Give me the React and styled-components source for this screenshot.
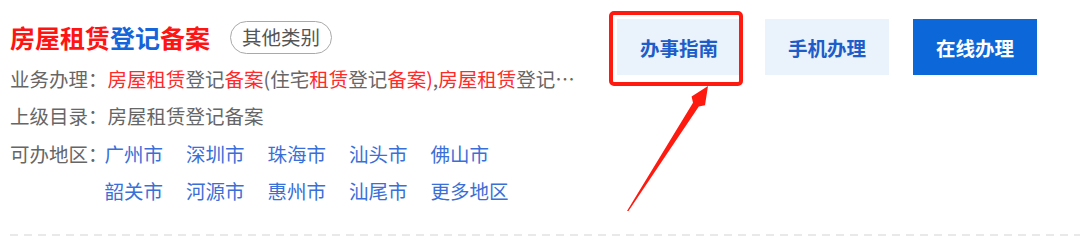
import React from "react";
import styled, { createGlobalStyle } from "styled-components";

const Global = createGlobalStyle`
  html, body { margin: 0; padding: 0; background: #fff; }
  body { font-family: "Noto Sans CJK SC", "Noto Sans", sans-serif; }
`;

const Page = styled.div`
  position: relative;
  width: 1080px;
  height: 240px;
  overflow: hidden;
`;

const Card = styled.div`
  display: flex;
  justify-content: space-between;
  align-items: flex-start;
  padding: 19px 43px 0 10px;
  height: 215px;
`;

const Info = styled.div`
  display: flex;
  flex-direction: column;
  width: 566px;
`;

const TitleRow = styled.div`
  display: flex;
  align-items: center;
  gap: 20px;
  height: 36px;
  margin-bottom: 4.5px;
`;

const Title = styled.h2`
  margin: 0;
  font-size: 25px;
  font-weight: 700;
  line-height: 36px;
  color: #ff1414;
  white-space: nowrap;
`;

const TitleBlue = styled.span`
  color: #1664d9;
`;

const Tag = styled.span`
  display: inline-flex;
  align-items: center;
  height: 31px;
  padding: 0 11px;
  border: 1px solid #a9a9a9;
  border-radius: 17px;
  font-size: 19.5px;
  color: #555;
  line-height: 1;
`;

const Row = styled.div`
  display: flex;
  align-items: flex-start;
  font-size: 19.5px;
  line-height: 37.5px;
  color: #666;
`;

const Label = styled.span`
  flex: none;
  color: #666;
`;

const Value = styled.span`
  flex: 1;
  min-width: 0;
  white-space: nowrap;
  overflow: hidden;
  text-overflow: ellipsis;
  color: #666;
`;

const Hi = styled.span`
  color: #ff2a2a;
`;

const Regions = styled.div`
  display: grid;
  grid-template-columns: repeat(5, auto);
  justify-content: start;
  column-gap: 23px;
  margin-left: -3px;
`;

const RegionLink = styled.a`
  color: #3a6fd8;
  text-decoration: none;
  white-space: nowrap;
`;

const Actions = styled.div`
  display: flex;
  gap: 24px;
`;

const Highlight = styled.div`
  position: relative;
  display: flex;
  &::after {
    content: "";
    position: absolute;
    left: -8px;
    top: -8px;
    right: -2px;
    bottom: -11px;
    border: 4px solid #ff1a10;
    border-radius: 5px;
    pointer-events: none;
  }
`;

const Button = styled.button`
  width: 124px;
  height: 56px;
  border: none;
  padding: 0;
  font-family: inherit;
  font-size: 19.5px;
  font-weight: 700;
  cursor: pointer;
  background: ${(p) => (p.$primary ? "#0c68d8" : "#eaf2fb")};
  color: ${(p) => (p.$primary ? "#ffffff" : "#1d5cc9")};
`;

const Divider = styled.div`
  margin-left: 10px;
  height: 2px;
  background: repeating-linear-gradient(
    to right,
    #e9e9e9 0 8px,
    transparent 8px 14px
  );
`;

const Arrow = styled.svg`
  position: absolute;
  left: 0;
  top: 0;
  pointer-events: none;
`;

const regions = [
  "广州市", "深圳市", "珠海市", "汕头市", "佛山市",
  "韶关市", "河源市", "惠州市", "汕尾市", "更多地区",
];

export default function App() {
  return (
    <Page>
      <Global />
      <Card>
        <Info>
          <TitleRow>
            <Title>
              房屋租赁<TitleBlue>登记</TitleBlue>备案
            </Title>
            <Tag>其他类别</Tag>
          </TitleRow>
          <Row>
            <Label>业务办理：</Label>
            <Value>
              <Hi>房屋租赁</Hi>登记<Hi>备案</Hi>(住宅<Hi>租赁</Hi>登记<Hi>备案)</Hi>,
              <Hi>房屋租赁</Hi>登记<Hi>备案</Hi>(非住宅<Hi>租赁</Hi>登记<Hi>备案)</Hi>
            </Value>
          </Row>
          <Row>
            <Label>上级目录：</Label>
            <Value>房屋租赁登记备案</Value>
          </Row>
          <Row>
            <Label>可办地区：</Label>
            <Regions>
              {regions.map((r) => (
                <RegionLink key={r} href="#">
                  {r}
                </RegionLink>
              ))}
            </Regions>
          </Row>
        </Info>
        <Actions>
          <Highlight>
            <Button>办事指南</Button>
          </Highlight>
          <Button>手机办理</Button>
          <Button $primary>在线办理</Button>
        </Actions>
      </Card>
      <Divider />
      <Arrow width="1080" height="240" viewBox="0 0 1080 240">
        <polygon
          points="627,211 693,102.7 691.6,96.5 708,86 705,105.3 698.8,106.5 628.5,211"
          fill="#ff1a10"
        />
      </Arrow>
    </Page>
  );
}
